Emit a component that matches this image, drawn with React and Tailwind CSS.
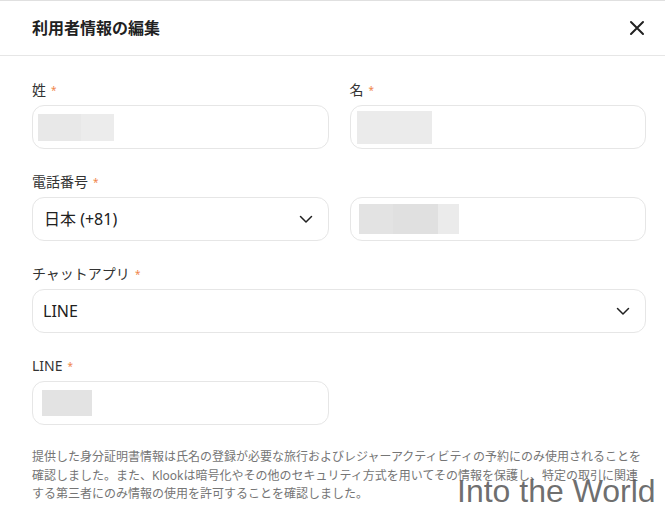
import React from 'react';

const font = { fontFamily: '"Noto Sans", "Noto Sans CJK JP", sans-serif' };

function Label({ text }) {
  return (
    <div className="flex h-5 items-center text-[14px] leading-5 text-[#333]">
      <span>{text}</span>
      <span className="ml-[5px] text-[10px] text-[#f0864a]">*</span>
    </div>
  );
}

function Chevron() {
  return (
    <svg width="16" height="16" viewBox="0 0 16 16" fill="none" stroke="#212121" strokeWidth="1.5" strokeLinecap="round" strokeLinejoin="round">
      <path d="M2.5 5.5 8 11l5.5-5.5" />
    </svg>
  );
}

function Box({ children, className = '' }) {
  return (
    <div className={`mt-[5px] flex h-11 items-center rounded-xl border border-[#e6e6e6] bg-white ${className}`}>
      {children}
    </div>
  );
}

export default function App() {
  return (
    <div className="relative h-[513px] w-[665px] overflow-hidden border-t border-[#e0e0e0] bg-white" style={font}>
      {/* header */}
      <div className="flex h-[55px] items-center justify-between border-b border-[#e6e6e6] pl-8 pr-[19px]">
        <h1 className="text-[16px] font-bold text-[#212121]">利用者情報の編集</h1>
        <svg width="16" height="16" viewBox="0 0 16 16" fill="none" stroke="#212121" strokeWidth="2" strokeLinecap="round" className="mr-[1px]">
          <path d="M2 2l12 12M14 2 2 14" />
        </svg>
      </div>

      {/* body */}
      <div className="flex flex-col gap-[23px] pl-8 pr-[19px] pt-[24px]">
        <div className="grid grid-cols-2 gap-[21px]">
          <div>
            <Label text="姓" />
            <Box className="pl-[5px]">
              <div className="flex h-[27px]">
                <div className="w-[43px] bg-[#e8e8e8]" />
                <div className="w-[33px] bg-[#ececec]" />
              </div>
            </Box>
          </div>
          <div>
            <Label text="名" />
            <Box className="pl-[6px]">
              <div className="h-[33px] w-[75px] bg-[#ebebeb]" />
            </Box>
          </div>
        </div>

        <div className="grid grid-cols-2 gap-[21px]">
          <div>
            <Label text="電話番号" />
            <Box className="justify-between pl-[11px] pr-[14px]">
              <span className="text-[16px] text-[#212121]">日本 (+81)</span>
              <Chevron />
            </Box>
          </div>
          <div>
            <div className="h-5" />
            <Box className="pl-[8px]">
              <div className="flex h-[30px]">
                <div className="w-[34px] bg-[#e3e3e3]" />
                <div className="w-[45px] bg-[#e0e0e0]" />
                <div className="w-[21px] bg-[#ebebeb]" />
              </div>
            </Box>
          </div>
        </div>

        <div>
          <Label text="チャットアプリ" />
          <Box className="justify-between pl-[10px] pr-[14px]">
            <span className="text-[16px] text-[#212121]">LINE</span>
            <Chevron />
          </Box>
        </div>

        <div className="grid grid-cols-2 gap-[21px]">
          <div>
            <Label text="LINE" />
            <Box className="pl-[9px]">
              <div className="h-[26px] w-[50px] bg-[#e3e3e3]" />
            </Box>
          </div>
        </div>

        <p className="whitespace-nowrap text-[12px] leading-[18.5px] text-[#757575]">
          提供した身分証明書情報は氏名の登録が必要な旅行およびレジャーアクティビティの予約にのみ使用されることを
          <br />
          確認しました。また、Klookは暗号化やその他のセキュリティ方式を用いてその情報を保護し、特定の取引に関連
          <br />
          する第三者にのみ情報の使用を許可することを確認しました。
        </p>
      </div>

      {/* watermark */}
      <div
        className="absolute left-[457px] top-[470px] text-[32px] leading-[40px] text-[#555]/85"
        style={{ fontFamily: '"Liberation Sans", Arial, sans-serif' }}
      >
        Into the World
      </div>
    </div>
  );
}
